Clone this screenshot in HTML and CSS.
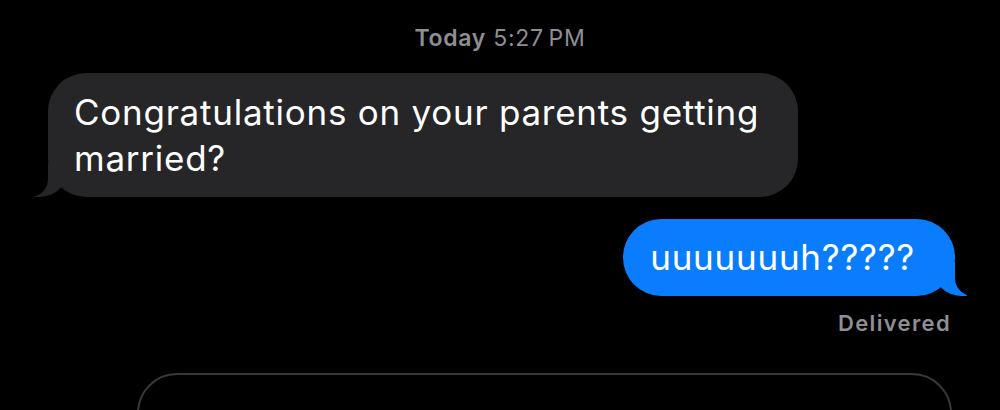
FILE: index.html
```html
<!DOCTYPE html>
<html lang="en">
<head>
    <meta charset="UTF-8">
    <meta name="viewport" content="width=device-width, initial-scale=1.0">
    <title>Messages</title>
    <link rel="stylesheet" href="styles.css">
</head>
<body>

    <div class="thread">
        <div class="timestamp"><b>Today</b> 5:27&#8201;PM</div>

        <div class="bubble them">Congratulations on your parents getting married?</div>

        <div class="bubble me">uuuuuuuh?????</div>
        <div class="status">Delivered</div>

        <div class="compose"></div>
    </div>

</body>
</html>
```

FILE: styles.css
```css
html, body {
    height: 100%;
}
body {
    margin: 0;
    background-color: #000;
    font-family: Inter, "Noto Sans", sans-serif;
    color: #fff;
    overflow: hidden;
}
.thread {
    display: flex;
    flex-direction: column;
    padding-top: 24px;
}
.timestamp {
    align-self: center;
    color: #8e8e93;
    font-size: 23px;
    letter-spacing: 0.7px;
    line-height: 28px;
    margin-bottom: 21px;
}
.timestamp b {
    font-weight: 600;
}
.bubble {
    position: relative;
    box-sizing: border-box;
    font-size: 35px;
    letter-spacing: 0.75px;
    line-height: 46px;
    border-radius: 38px;
}
.them {
    align-self: flex-start;
    margin-left: 48px;
    max-width: 750px;
    padding: 16px 26px;
    background-color: #262629;
}
.me {
    align-self: flex-end;
    margin-top: 22px;
    margin-right: 45px;
    padding: 15px 40px 16px 27px;
    background-color: #0a7dff;
}
/* tails */
.bubble::before,
.bubble::after {
    content: "";
    position: absolute;
    bottom: 0;
    height: 34px;
}
.them::before {
    left: -14px;
    width: 34px;
    background-color: #262629;
    border-bottom-right-radius: 28px;
}
.them::after {
    left: -22px;
    width: 22px;
    background-color: #000;
    border-bottom-right-radius: 18px;
}
.me::before {
    right: -12px;
    width: 34px;
    background-color: #0a7dff;
    border-bottom-left-radius: 28px;
}
.me::after {
    right: -22px;
    width: 22px;
    background-color: #000;
    border-bottom-left-radius: 18px;
}
.status {
    align-self: flex-end;
    margin-right: 49px;
    margin-top: 14px;
    color: #8e8e93;
    font-size: 22px;
    font-weight: 600;
    letter-spacing: 1.35px;
    line-height: 26px;
}
.compose {
    margin: 37px 48px 0 137px;
    height: 120px;
    border: 2px solid #38383a;
    border-radius: 40px;
}
```
